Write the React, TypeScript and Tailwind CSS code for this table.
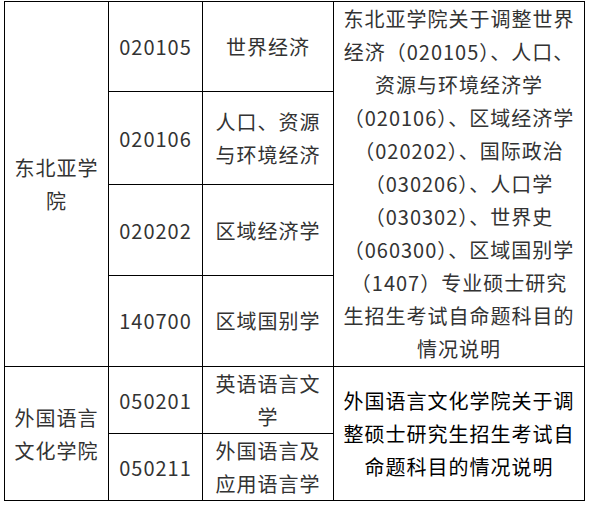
const rows = [
  { code: "020105", major: ["世界经济"], h: "h-[90px]" },
  { code: "020106", major: ["人口、资源", "与环境经济"], h: "h-[93px]" },
  { code: "020202", major: ["区域经济学"], h: "h-[90px]" },
  { code: "140700", major: ["区域国别学"], h: "h-[91px]" },
];

const noteLines = [
  "东北亚学院关于调整世界",
  "经济（020105）、人口、",
  "资源与环境经济学",
  "（020106）、区域经济学",
  "（020202）、国际政治",
  "（030206）、人口学",
  "（030302）、世界史",
  "（060300）、区域国别学",
  "（1407）专业硕士研究",
  "生招生考试自命题科目的",
  "情况说明",
];

const td = "border border-black text-center align-middle p-0";

const Lines = ({ lines }: { lines: string[] }) => (
  <>
    {lines.map((l) => (
      <div key={l} className="whitespace-nowrap">
        {l}
      </div>
    ))}
  </>
);

const App = () => {
  return (
    <div className="w-[589px] h-[505px] bg-white pt-px pl-1">
      <table
        className="border-collapse table-fixed w-[580px] text-[20px] leading-[33px] tracking-[1px] text-[#333]"
        style={{ fontFamily: '"Noto Sans CJK SC", "Noto Sans", sans-serif' }}
      >
        <colgroup>
          <col className="w-[104px]" />
          <col className="w-[94px]" />
          <col className="w-[131px]" />
          <col className="w-[251px]" />
        </colgroup>
        <tbody>
          {rows.map((r, i) => (
            <tr key={r.code} className={r.h}>
              {i === 0 && (
                <td rowSpan={4} className={td}>
                  <Lines lines={["东北亚学", "院"]} />
                </td>
              )}
              <td className={td}>{r.code}</td>
              <td className={td}>
                <Lines lines={r.major} />
              </td>
              {i === 0 && (
                <td rowSpan={4} className={`${td} pb-px`}>
                  <Lines lines={noteLines} />
                </td>
              )}
            </tr>
          ))}
          <tr className="h-[67px]">
            <td rowSpan={2} className={td}>
              <Lines lines={["外国语言", "文化学院"]} />
            </td>
            <td className={td}>050201</td>
            <td className={td}>
              <Lines lines={["英语语言文", "学"]} />
            </td>
            <td rowSpan={2} className={`${td} text-black`}>
              <Lines lines={["外国语言文化学院关于调", "整硕士研究生招生考试自", "命题科目的情况说明"]} />
            </td>
          </tr>
          <tr className="h-[67px]">
            <td className={td}>050211</td>
            <td className={td}>
              <Lines lines={["外国语言及", "应用语言学"]} />
            </td>
          </tr>
        </tbody>
      </table>
    </div>
  );
};

export default App;
